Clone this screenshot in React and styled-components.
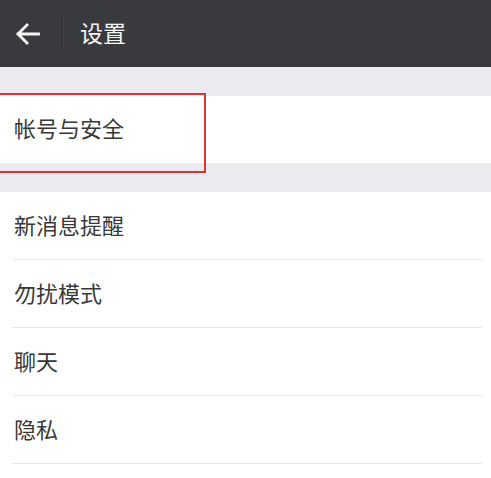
import React from "react";
import styled, { createGlobalStyle } from "styled-components";

const Global = createGlobalStyle`
  html, body { margin: 0; padding: 0; background: #ebeaef; }
  body { font-family: "Noto Sans CJK SC", "Noto Sans", sans-serif; }
`;

const Page = styled.div`
  width: 491px;
  height: 478px;
  background: #ebeaef;
  overflow: hidden;
  position: relative;
`;

const Header = styled.header`
  height: 67px;
  background: #393a3e;
  display: flex;
  align-items: center;
`;

const BackButton = styled.div`
  width: 62px;
  height: 100%;
  display: flex;
  align-items: center;
  padding-left: 15px;
  box-sizing: border-box;
`;

const Divider = styled.div`
  width: 1px;
  height: 37px;
  background: #2e2f33;
  box-shadow: 1px 0 0 #45464a;
`;

const Title = styled.h1`
  margin: 0 0 0 17px;
  font-size: 23px;
  font-weight: 400;
  color: #f4f4f4;
  line-height: 1;
  padding-bottom: 2px;
`;

const Section = styled.section`
  margin-top: ${(p) => p.$gap}px;
  background: #ffffff;
  position: relative;
`;

const Row = styled.div`
  height: ${(p) => p.$h}px;
  display: flex;
  align-items: center;
  padding: 0 0 5px 14px;
  font-size: 22px;
  color: #383838;
  position: relative;
  box-sizing: border-box;
  &::after {
    content: "";
    display: ${(p) => (p.$line ? "block" : "none")};
    position: absolute;
    left: 13px;
    right: 9px;
    bottom: 0;
    height: 1px;
    background: #e6e6e6;
  }
`;

const Highlight = styled.div`
  position: absolute;
  left: -2px;
  top: -3px;
  width: 208px;
  height: 80px;
  border: 2px solid #d9343a;
  box-sizing: border-box;
  pointer-events: none;
`;

const items = ["新消息提醒", "勿扰模式", "聊天", "隐私"];

export default function App() {
  return (
    <Page>
      <Global />
      <Header>
        <BackButton>
          <svg width="25" height="22" viewBox="0 0 25 22" fill="none">
            <path
              d="M23.5 11H3M12 2L3 11l9 9"
              stroke="#f4f4f4"
              strokeWidth="2.8"
              strokeLinecap="square"
            />
          </svg>
        </BackButton>
        <Divider />
        <Title>设置</Title>
      </Header>
      <Section $gap={29}>
        <Row $h={67}>帐号与安全</Row>
        <Highlight />
      </Section>
      <Section $gap={29}>
        {items.map((t) => (
          <Row key={t} $h={68} $line>
            {t}
          </Row>
        ))}
        <Row $h={20} />
      </Section>
    </Page>
  );
}
